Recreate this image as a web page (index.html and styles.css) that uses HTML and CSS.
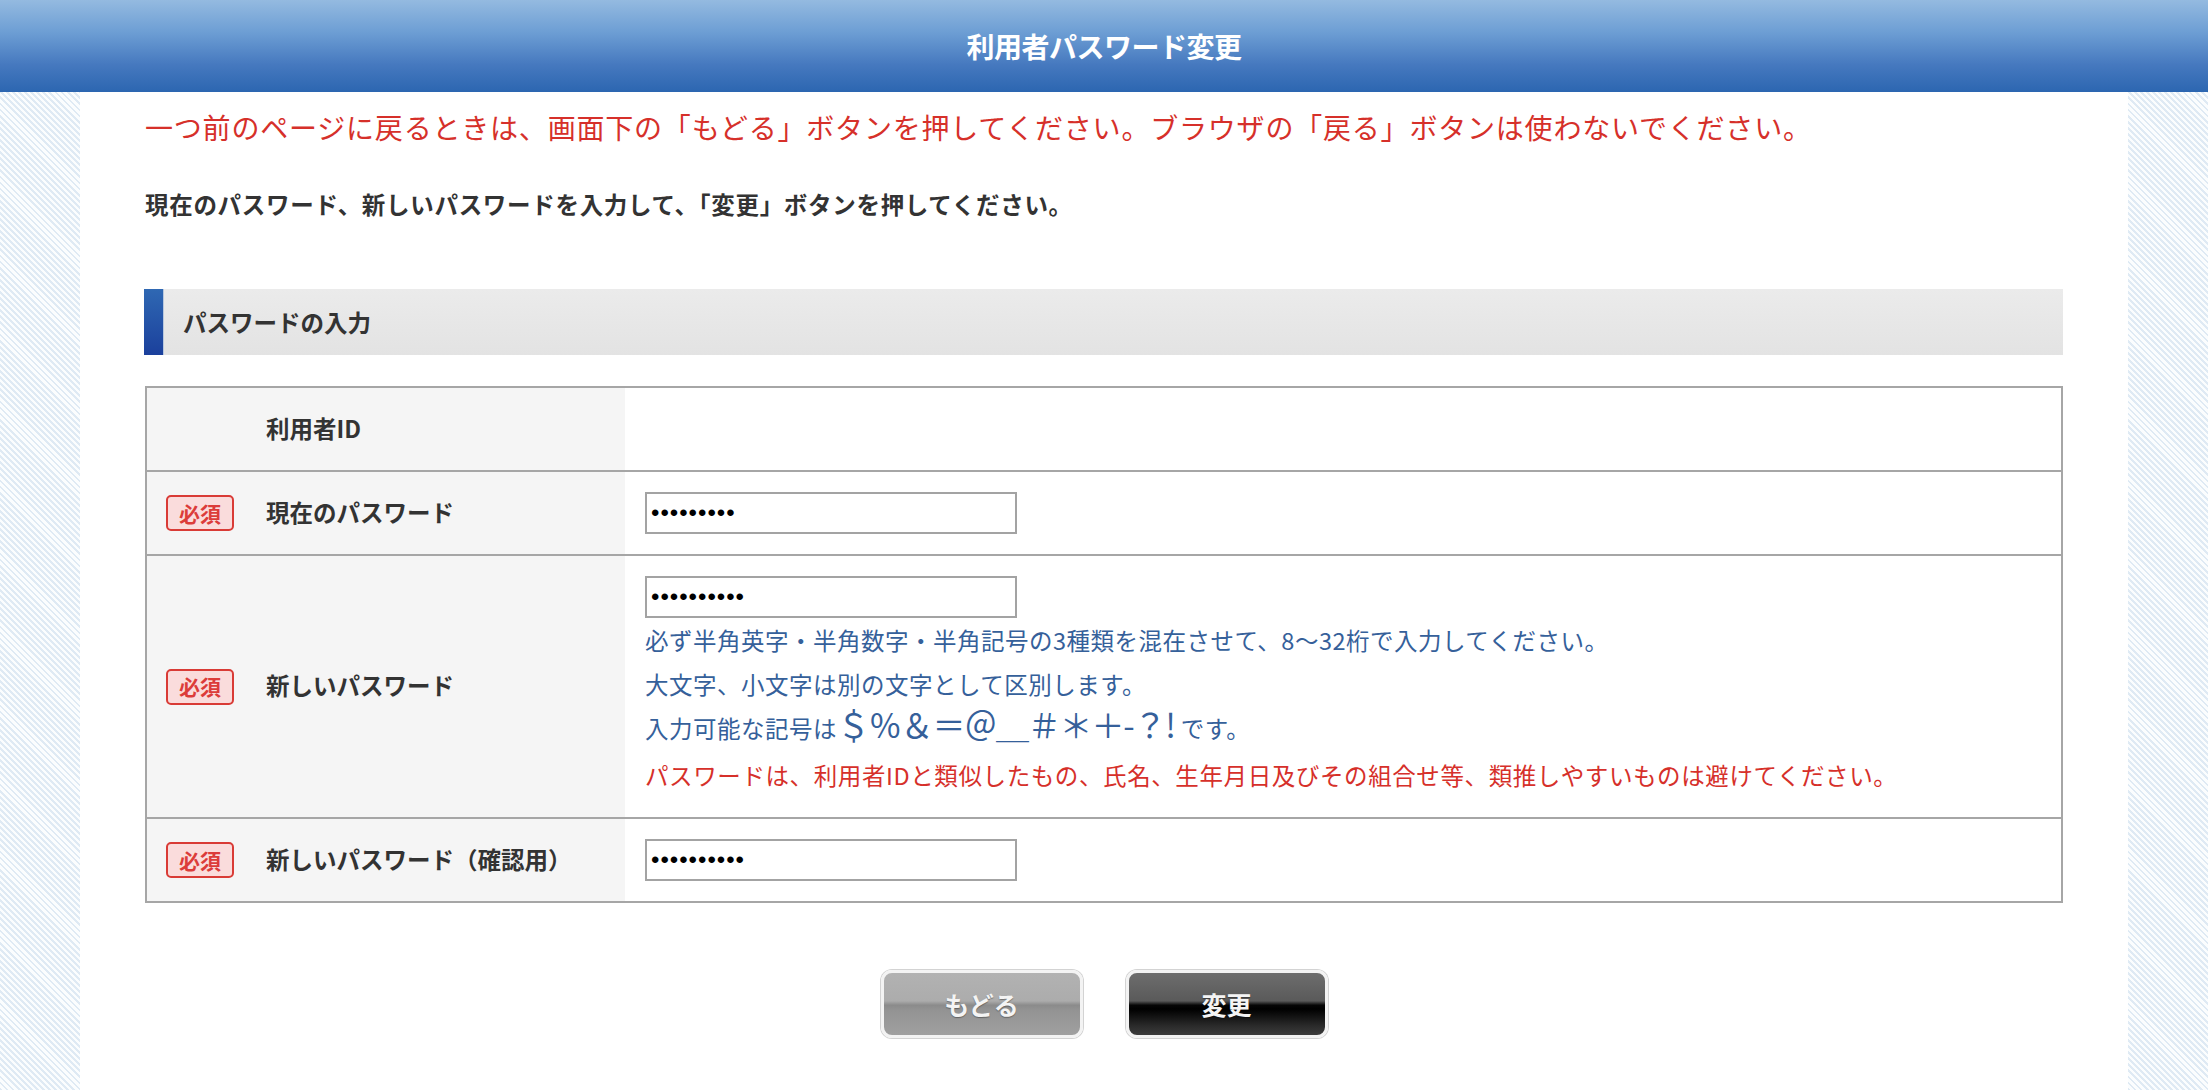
FILE: index.html
```html
<!DOCTYPE html>
<html lang="ja">
<head>
<meta charset="utf-8">
<title>利用者パスワード変更</title>
<link rel="stylesheet" href="styles.css">
</head>
<body>
<header class="header"><h1 class="header-title">利用者パスワード変更</h1></header>
<div class="page">
  <div class="side"></div>
  <main class="content">
    <p class="notice">一つ前のページに戻るときは、画面下の「もどる」ボタンを押してください。ブラウザの「戻る」ボタンは使わないでください。</p>
    <p class="lead">現在のパスワード、新しいパスワードを入力して、「変更」ボタンを押してください。</p>
    <h2 class="section-title">パスワードの入力</h2>
    <div class="form">
      <div class="row">
        <div class="label"><span class="badge-slot"></span><span class="label-text">利用者ID</span></div>
        <div class="value value-empty"></div>
      </div>
      <div class="row">
        <div class="label"><span class="badge-slot"><span class="badge">必須</span></span><span class="label-text">現在のパスワード</span></div>
        <div class="value"><input class="pw" type="password" value="aaaaaaaaa"></div>
      </div>
      <div class="row">
        <div class="label"><span class="badge-slot"><span class="badge">必須</span></span><span class="label-text">新しいパスワード</span></div>
        <div class="value">
          <input class="pw" type="password" value="aaaaaaaaaa">
          <p class="help">必ず半角英字・半角数字・半角記号の3種類を混在させて、8〜32桁で入力してください。</p>
          <p class="help">大文字、小文字は別の文字として区別します。</p>
          <p class="help">入力可能な記号は<span class="symbols">＄％＆＝＠＿＃＊＋-？!</span>です。</p>
          <p class="help help-warn">パスワードは、利用者IDと類似したもの、氏名、生年月日及びその組合せ等、類推しやすいものは避けてください。</p>
        </div>
      </div>
      <div class="row">
        <div class="label"><span class="badge-slot"><span class="badge">必須</span></span><span class="label-text">新しいパスワード（確認用）</span></div>
        <div class="value"><input class="pw" type="password" value="aaaaaaaaaa"></div>
      </div>
    </div>
    <div class="buttons">
      <button class="btn btn-back" type="button">もどる</button>
      <button class="btn btn-submit" type="button">変更</button>
    </div>
  </main>
  <div class="side"></div>
</div>
</body>
</html>
```

FILE: styles.css
```css
* { box-sizing: border-box; }

html, body {
  margin: 0;
  padding: 0;
  background: #fff;
  font-family: "Noto Sans CJK JP", "Noto Sans", sans-serif;
  color: #333;
}

.header {
  height: 92px;
  display: flex;
  align-items: center;
  justify-content: center;
  background: linear-gradient(to bottom, #94bae0 0%, #6d9ed4 35%, #4679bf 70%, #2c66b1 100%);
}

.header-title {
  margin: 0;
  font-size: 28px;
  font-weight: 700;
  color: #fff;
  line-height: 1;
  letter-spacing: -0.5px;
}

.page {
  display: flex;
  min-height: 998px;
}

.side {
  width: 80px;
  flex: none;
  background: repeating-linear-gradient(45deg, #dfeaf4 0 2px, #fbfdfe 2px 4.3px);
}

.content {
  flex: 1;
  background: #fff;
  padding: 0 65px 40px 65px;
}

.notice {
  margin: 15px 0 0;
  font-size: 28px;
  line-height: 40px;
  color: #d6302a;
  letter-spacing: 0.8px;
}

.lead {
  margin: 40px 0 0;
  font-size: 23.5px;
  line-height: 34px;
  font-weight: 700;
  color: #333;
  letter-spacing: 0.7px;
}

.section-title {
  margin: 68px 0 0 -1px;
  height: 66px;
  display: flex;
  align-items: center;
  padding-left: 39px;
  font-size: 23.5px;
  font-weight: 700;
  color: #333;
  background:
    linear-gradient(to bottom, #2f68b3, #1b409c) left top / 19px 100% no-repeat,
    linear-gradient(to right, transparent 19px, #b9c8de 19px, #b9c8de 20px, transparent 20px) left top / 21px 100% no-repeat,
    linear-gradient(to bottom, #ebebeb, #e3e3e3);
}

.form {
  margin-top: 31px;
  border: 2px solid #a6a6a6;
}

.row {
  display: flex;
  border-top: 2px solid #a6a6a6;
}

.row:first-child { border-top: 0; }

.label {
  width: 478px;
  flex: none;
  background: #f5f5f5;
  display: flex;
  align-items: center;
  padding-left: 19px;
}

.badge-slot {
  width: 68px;
  flex: none;
  margin-right: 32px;
  display: flex;
}

.badge {
  width: 68px;
  height: 36px;
  display: flex;
  align-items: center;
  justify-content: center;
  border: 2px solid #d93b36;
  border-radius: 5px;
  background: #fadcdc;
  color: #dc3c3a;
  font-size: 21px;
  font-weight: 700;
  line-height: 1;
}

.label-text {
  font-size: 23.5px;
  font-weight: 700;
  color: #333;
  margin-top: -3px;
}

.value {
  flex: 1;
  padding: 20px 0 20px 20px;
  min-height: 82px;
}

.pw {
  display: block;
  width: 372px;
  height: 42px;
  margin: 0;
  border: 2px solid #a3a3a3;
  background: #fff;
  padding: 0 4px;
  font-family: "Liberation Sans", sans-serif;
  font-size: 24px;
  letter-spacing: 1px;
  color: #000;
  outline: none;
}

.help {
  margin: 0;
  font-size: 23.5px;
  line-height: 44px;
  color: #35609a;
  letter-spacing: 0.5px;
}

.symbols {
  font-size: 33px;
  line-height: 1;
  letter-spacing: -1.2px;
  margin-right: 6px;
}

.help-warn {
  color: #d6302a;
  margin-top: 3px;
  letter-spacing: 0.6px;
}

.buttons {
  margin-top: 67px;
  display: flex;
  justify-content: center;
  gap: 43px;
}

.btn {
  width: 202px;
  height: 68px;
  border: 3px solid #f3f3f3;
  border-radius: 11px;
  box-shadow: 0 0 0 1px #d3d3d3;
  font-family: "Noto Sans CJK JP", sans-serif;
  font-size: 25px;
  font-weight: 700;
  color: #f4f4f4;
  text-shadow: 0 1px 1px rgba(0, 0, 0, 0.35);
  padding: 0;
  cursor: pointer;
}

.btn-back {
  background: linear-gradient(to bottom, #b2b2b2 0%, #acacac 45%, #8b8b8b 52%, #939393 60%, #a0a0a0 100%);
}

.btn-submit {
  background: linear-gradient(to bottom, #6d6d6d 0%, #5a5a5a 45%, #050505 52%, #000 58%, #2a2a2a 85%, #3c3c3c 100%);
}
```
